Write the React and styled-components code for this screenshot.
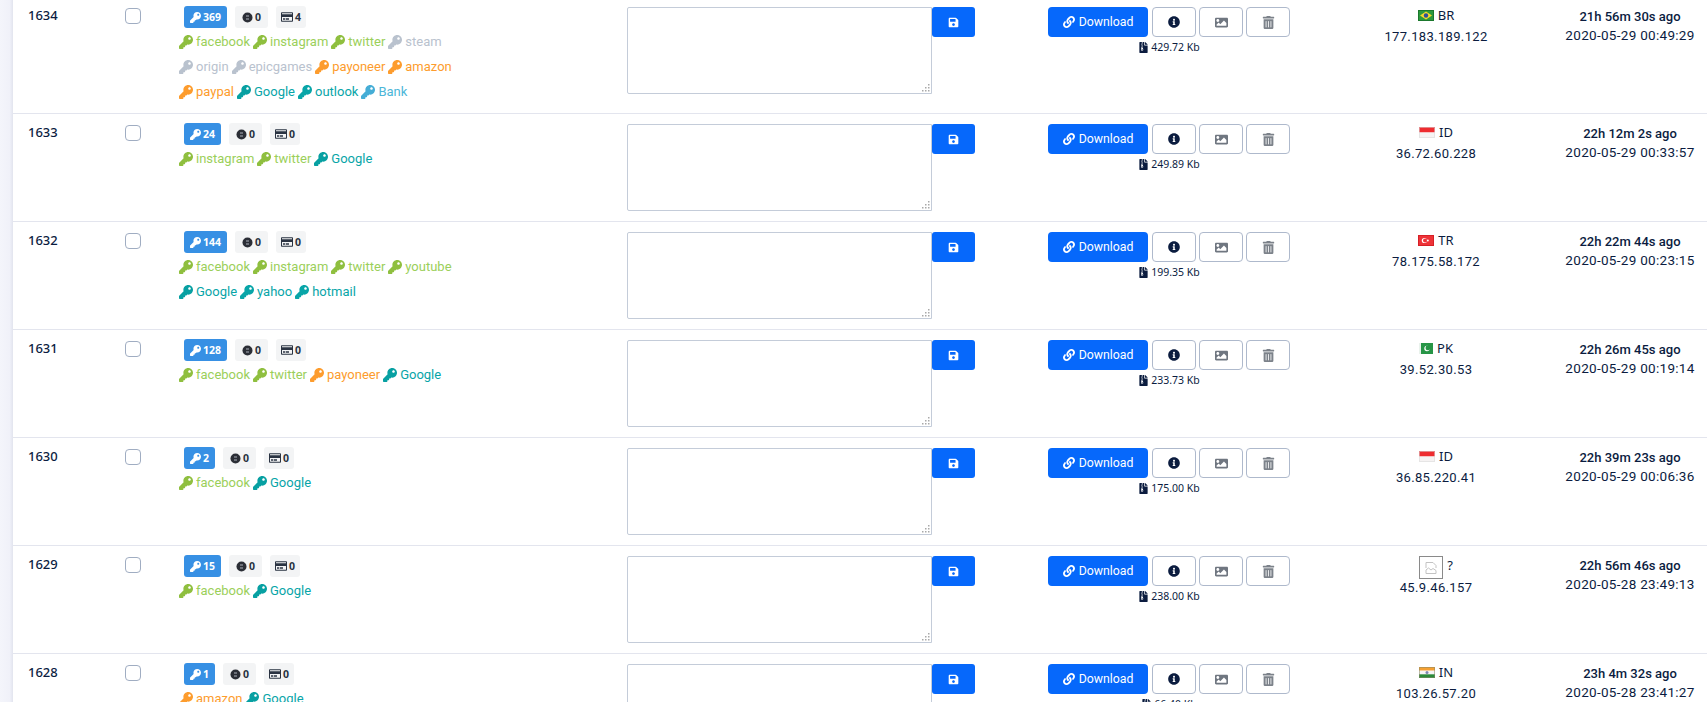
import React from 'react';
import styled, { createGlobalStyle } from 'styled-components';
import {
  FaKey,
  FaRegCreditCard,
  FaSave,
  FaLink,
  FaInfoCircle,
  FaImage,
  FaTrashAlt,
  FaFileArchive,
} from 'react-icons/fa';

const GlobalStyle = createGlobalStyle`
  html, body {
    margin: 0;
    height: 702px;
    overflow: hidden;
    background: #fff;
  }
  body {
    font-family: "Noto Sans", "Liberation Sans", sans-serif;
    color: #0b1c3f;
  }
`;

const Page = styled.div`
  display: flex;
  height: 702px;
  overflow: hidden;
`;

const SideEdge = styled.div`
  flex: 0 0 13px;
  background: linear-gradient(90deg, #f4f5fb 0, #f0f1f9 75%, #e2e4ee 100%);
`;

const Table = styled.div`
  flex: 1;
  margin-top: -3px;
`;

const Row = styled.div`
  display: grid;
  grid-template-columns: 97px 54px 448px 421px 288px 200px 171px;
  padding: 10px 0 9px 15px;
  border-bottom: 1px solid #e3e5ee;
`;

const IdCell = styled.div`
  font-size: 13px;
  font-weight: 500;
  line-height: 18px;
  margin-top: -1px;
`;

const Check = styled.span`
  display: block;
  width: 14px;
  height: 14px;
  margin-top: 1px;
  border: 1px solid #a0adc2;
  border-radius: 4px;
`;

const TagCell = styled.div`
  min-height: 88px;
`;

const Badges = styled.div`
  display: flex;
  gap: 8px;
  margin: -1px 0 0 5px;
`;

const Badge = styled.span`
  display: inline-flex;
  align-items: center;
  gap: 2px;
  height: 22px;
  padding: 0 ${p => p.$pad}px;
  border-radius: 3px;
  font-size: 10.5px;
  font-weight: 700;
  color: ${p => (p.$primary ? '#fff' : '#2a3342')};
  background: ${p => (p.$primary ? '#3790e4' : '#f3f4f5')};
`;

const TagLines = styled.div`
  max-width: 280px;
  margin-top: 1px;
  font-family: Roboto, sans-serif;
  font-size: 13px;
  line-height: 25px;
`;

const Tag = styled.span`
  display: inline-flex;
  align-items: center;
  gap: 3px;
  margin-right: 3px;
  vertical-align: top;
  color: ${p => p.$color};
`;

const NoteCell = styled.div`
  display: flex;
  align-items: flex-start;
`;

const NoteWrap = styled.div`
  position: relative;
  width: 305px;
  height: 87px;
`;

const Note = styled.textarea`
  display: block;
  box-sizing: border-box;
  width: 100%;
  height: 100%;
  padding: 6px;
  resize: none;
  border: 1px solid #c4ccd9;
  border-radius: 2px 0 0 2px;
  outline: none;
  background: #fff;
`;

const Grip = styled.svg`
  position: absolute;
  right: 2px;
  bottom: 2px;
`;

const SaveButton = styled.button`
  display: flex;
  align-items: center;
  justify-content: center;
  width: 43px;
  height: 30px;
  padding: 0;
  border: 0;
  border-radius: 3px;
  color: #fff;
  background: #0668fb;
`;

const ActionCell = styled.div`
  display: flex;
  flex-direction: column;
  width: 242px;
`;

const Actions = styled.div`
  display: flex;
  gap: 3px;
`;

const DownloadButton = styled.button`
  display: flex;
  align-items: center;
  justify-content: center;
  gap: 4px;
  width: 100px;
  height: 30px;
  margin-right: 1px;
  padding: 0;
  border: 0;
  border-radius: 4px;
  font-family: Roboto, sans-serif;
  font-size: 12.3px;
  color: #fff;
  background: #0668fb;
`;

const IconButton = styled.button`
  display: flex;
  align-items: center;
  justify-content: center;
  width: 44px;
  height: 30px;
  padding: 0;
  color: ${p => p.$color};
  background: #fff;
  border: 1px solid #aeb9cc;
  border-radius: 4px;
`;

const FileSize = styled.div`
  display: flex;
  align-items: center;
  justify-content: center;
  gap: 2px;
  margin-top: 3px;
  font-size: 10.5px;
  line-height: 14px;
`;

const PlaceCell = styled.div`
  margin-top: -1px;
  text-align: center;
`;

const Country = styled.div`
  display: flex;
  align-items: center;
  justify-content: center;
  gap: 4px;
  min-height: 16px;
  font-size: 13px;
`;

const Ip = styled.div`
  margin-top: 3px;
  font-family: Roboto, sans-serif;
  font-size: 13px;
  letter-spacing: 0.35px;
  line-height: 20px;
`;

const TimeCell = styled.div`
  padding-left: 17px;
  text-align: center;
  font-family: Roboto, sans-serif;
`;

const Ago = styled.div`
  margin-top: 1px;
  font-size: 13px;
  font-weight: 500;
  line-height: 18px;
`;

const Stamp = styled.div`
  font-size: 13.5px;
  letter-spacing: 0.3px;
  line-height: 18px;
`;

const FlagFrame = ({ children, edge }) => (
  <svg width="16" height="11" viewBox="0 0 16 11">
    {children}
    <rect x="0.5" y="0.5" width="15" height="10" fill="none" stroke={edge} strokeOpacity="0.55" />
  </svg>
);

const Flag = ({ code }) => {
  if (code === 'BR') {
    return (
      <FlagFrame edge="#0f5c20">
        <rect width="16" height="11" fill="#2c9a3c" />
        <path d="M8 1.5 14 5.5 8 9.5 2 5.5Z" fill="#f3d92c" />
        <circle cx="8" cy="5.5" r="2.2" fill="#2c4f9a" />
      </FlagFrame>
    );
  }
  if (code === 'ID') {
    return (
      <FlagFrame edge="#d8d8d8">
        <rect width="16" height="5.5" fill="#ee2c30" />
        <rect y="5.5" width="16" height="5.5" fill="#f6f3f3" />
      </FlagFrame>
    );
  }
  if (code === 'TR') {
    return (
      <FlagFrame edge="#c21018">
        <rect width="16" height="11" fill="#ee3338" />
        <circle cx="6.4" cy="5.5" r="2.6" fill="#fff" />
        <circle cx="7.1" cy="5.5" r="2.1" fill="#ee3338" />
        <circle cx="9.8" cy="5.5" r="1" fill="#fff" />
      </FlagFrame>
    );
  }
  if (code === 'PK') {
    return (
      <svg width="14" height="11" viewBox="0 0 14 11">
        <rect width="14" height="11" fill="#279546" />
        <rect width="2" height="11" fill="#e9f2ec" />
        <circle cx="8" cy="5.5" r="2.7" fill="#fff" />
        <circle cx="8.9" cy="4.9" r="2.4" fill="#279546" />
      </svg>
    );
  }
  if (code === 'IN') {
    return (
      <FlagFrame edge="#8a8a6a">
        <rect width="16" height="3.7" fill="#f5a032" />
        <rect y="3.7" width="16" height="3.6" fill="#f5f5f5" />
        <rect y="7.3" width="16" height="3.7" fill="#2b8a3a" />
        <circle cx="8" cy="5.5" r="1.5" fill="#7d86b0" />
      </FlagFrame>
    );
  }
  return null;
};

const BrokenFlagBox = styled.span`
  display: inline-flex;
  align-items: center;
  justify-content: center;
  box-sizing: border-box;
  width: 24px;
  height: 23px;
  margin: 1px 0 -4px;
  border: 1px solid #8a8a8a;
`;

const BrokenFlag = () => (
  <BrokenFlagBox>
    <svg width="14" height="14" viewBox="0 0 14 14" fill="none" stroke="#c3c3c3" strokeWidth="1">
      <path d="M2 7V1.5h7l3 3V7" />
      <path d="M2 9l2.5-2 2.5 2 2-1.5 3 2V12.5H2Z" />
    </svg>
  </BrokenFlagBox>
);

// dark round coin of the second badge
const CoinIcon = () => (
  <svg width="11" height="11" viewBox="0 0 11 11">
    <circle cx="5.5" cy="5.5" r="5" fill="#2b2e36" />
    <rect x="4" y="3" width="3" height="2" fill="#6b6f78" />
    <rect x="4" y="6" width="3" height="2" fill="#6b6f78" />
  </svg>
);

const GripDots = () => (
  <Grip width="8" height="8" viewBox="0 0 8 8" fill="#a9a9a9">
    <rect x="6" y="0" width="1.5" height="1.5" />
    <rect x="3" y="3" width="1.5" height="1.5" />
    <rect x="6" y="3" width="1.5" height="1.5" />
    <rect x="0" y="6" width="1.5" height="1.5" />
    <rect x="3" y="6" width="1.5" height="1.5" />
    <rect x="6" y="6" width="1.5" height="1.5" />
  </Grip>
);

const green = '#9bcf5a';
const grey = '#b9c2ce';
const orange = '#fd9c2d';
const teal = '#08a5a8';
const sky = '#4cb6d8';

const tagColors = {
  facebook: green,
  instagram: green,
  twitter: green,
  youtube: green,
  steam: grey,
  origin: grey,
  epicgames: grey,
  payoneer: orange,
  amazon: orange,
  paypal: orange,
  Google: teal,
  yahoo: teal,
  hotmail: teal,
  outlook: teal,
  Bank: sky,
};

const keyColors = { ...tagColors, facebook: '#8fbf3f', instagram: '#8fbf3f', twitter: '#8fbf3f', youtube: '#8fbf3f', Google: '#07a0a2', Bank: '#45add6' };

const rows = [
  {
    id: 1634, keys: 369, coins: 0, cards: 4,
    tags: ['facebook', 'instagram', 'twitter', 'steam', 'origin', 'epicgames', 'payoneer', 'amazon', 'paypal', 'Google', 'outlook', 'Bank'],
    size: '429.72 Kb', code: 'BR', ip: '177.183.189.122', ago: '21h 56m 30s ago', at: '2020-05-29 00:49:29',
  },
  {
    id: 1633, keys: 24, coins: 0, cards: 0,
    tags: ['instagram', 'twitter', 'Google'],
    size: '249.89 Kb', code: 'ID', ip: '36.72.60.228', ago: '22h 12m 2s ago', at: '2020-05-29 00:33:57',
  },
  {
    id: 1632, keys: 144, coins: 0, cards: 0,
    tags: ['facebook', 'instagram', 'twitter', 'youtube', 'Google', 'yahoo', 'hotmail'],
    size: '199.35 Kb', code: 'TR', ip: '78.175.58.172', ago: '22h 22m 44s ago', at: '2020-05-29 00:23:15',
  },
  {
    id: 1631, keys: 128, coins: 0, cards: 0,
    tags: ['facebook', 'twitter', 'payoneer', 'Google'],
    size: '233.73 Kb', code: 'PK', ip: '39.52.30.53', ago: '22h 26m 45s ago', at: '2020-05-29 00:19:14',
  },
  {
    id: 1630, keys: 2, coins: 0, cards: 0,
    tags: ['facebook', 'Google'],
    size: '175.00 Kb', code: 'ID', ip: '36.85.220.41', ago: '22h 39m 23s ago', at: '2020-05-29 00:06:36',
  },
  {
    id: 1629, keys: 15, coins: 0, cards: 0,
    tags: ['facebook', 'Google'],
    size: '238.00 Kb', code: '?', ip: '45.9.46.157', ago: '22h 56m 46s ago', at: '2020-05-28 23:49:13',
  },
  {
    id: 1628, keys: 1, coins: 0, cards: 0,
    tags: ['amazon', 'Google'],
    size: '66.40 Kb', code: 'IN', ip: '103.26.57.20', ago: '23h 4m 32s ago', at: '2020-05-28 23:41:27',
  },
];

export default function App() {
  return (
    <Page>
      <GlobalStyle />
      <SideEdge />
      <Table>
        {rows.map(r => (
          <Row key={r.id}>
            <IdCell>{r.id}</IdCell>
            <div><Check /></div>
            <TagCell>
              <Badges>
                <Badge $primary $pad={6}><FaKey size={11} />{r.keys}</Badge>
                <Badge $pad={7}><CoinIcon />{r.coins}</Badge>
                <Badge $pad={5}><FaRegCreditCard size={12} />{r.cards}</Badge>
              </Badges>
              <TagLines>
                {r.tags.map(t => (
                  <Tag key={t} $color={tagColors[t]}>
                    <FaKey size={14} color={keyColors[t]} />{t}
                  </Tag>
                ))}
              </TagLines>
            </TagCell>
            <NoteCell>
              <NoteWrap>
                <Note />
                <GripDots />
              </NoteWrap>
              <SaveButton><FaSave size={11} /></SaveButton>
            </NoteCell>
            <ActionCell>
              <Actions>
                <DownloadButton><FaLink size={12} />Download</DownloadButton>
                <IconButton $color="#0b1c3f"><FaInfoCircle size={12} /></IconButton>
                <IconButton $color="#6f7680"><FaImage size={13} /></IconButton>
                <IconButton $color="#7c828a"><FaTrashAlt size={13} /></IconButton>
              </Actions>
              <FileSize><FaFileArchive size={11} />{r.size}</FileSize>
            </ActionCell>
            <PlaceCell>
              <Country>
                {r.code === '?' ? <BrokenFlag /> : <Flag code={r.code} />}
                {r.code}
              </Country>
              <Ip>{r.ip}</Ip>
            </PlaceCell>
            <TimeCell>
              <Ago>{r.ago}</Ago>
              <Stamp>{r.at}</Stamp>
            </TimeCell>
          </Row>
        ))}
      </Table>
    </Page>
  );
}
